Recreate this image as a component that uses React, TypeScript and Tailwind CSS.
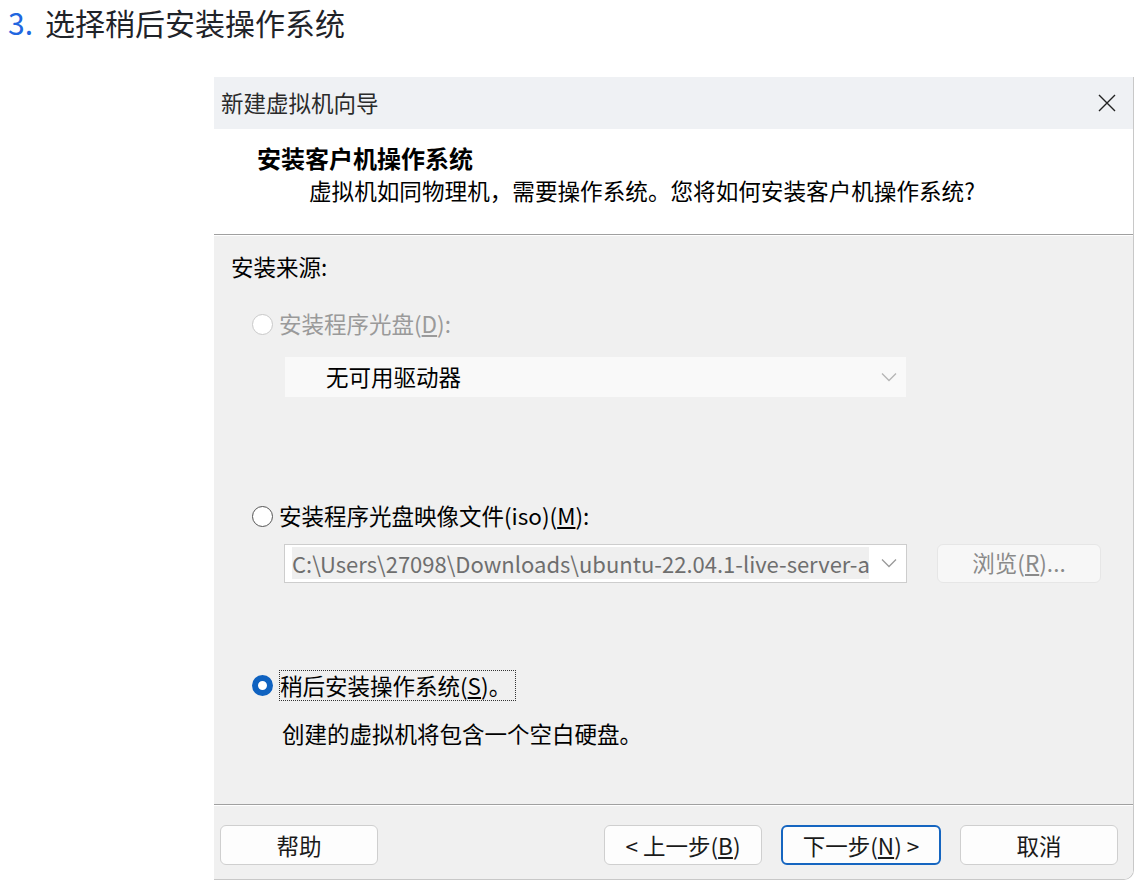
import React from 'react';

const cjk = { fontFamily: '"Noto Sans CJK SC", "Noto Sans", sans-serif' };

const Chevron: React.FC<{ color?: string }> = ({ color = '#8a8a8a' }) => (
  <svg width="16" height="10" viewBox="0 0 16 10" fill="none">
    <path d="M1 1.5 L8 8.5 L15 1.5" stroke={color} strokeWidth="1.3" />
  </svg>
);

const Radio: React.FC<{ checked?: boolean; disabled?: boolean }> = ({ checked, disabled }) => {
  if (checked) {
    return <span className="w-[21px] h-[21px] rounded-full border-[6px] border-[#0f62c0] bg-white shrink-0" />;
  }
  return (
    <span
      className={
        'w-[21px] h-[21px] rounded-full border-[1.5px] bg-white shrink-0 ' +
        (disabled ? 'border-[#c9c9c9] bg-[#f6f6f6]' : 'border-[#555555]')
      }
    />
  );
};

const Btn: React.FC<{ children: React.ReactNode; primary?: boolean; className?: string }> = ({ children, primary, className }) => (
  <button
    className={
      'h-[40px] w-[158px] rounded-[6px] bg-[#fdfdfd] text-[22.5px] text-[#1a1a1a] flex items-center justify-center leading-none ' +
      (primary ? 'border-2 border-[#1565c0] ' : 'border border-[#cfcfcf] ') +
      (className || '')
    }
    style={cjk}
  >
    {children}
  </button>
);

const App: React.FC = () => {
  return (
    <div className="w-[1137px] h-[882px] bg-white overflow-hidden" style={cjk}>
      {/* 步骤标题 */}
      <div className="h-[44px] flex items-center pl-[8px] text-[30px] text-[#1f2329]">
        <span className="text-[#2166e0] mr-[12px]">3.</span>
        <span>选择稍后安装操作系统</span>
      </div>

      <div className="ml-[214px] mt-[33px] w-[920px] rounded-br-[10px] border-r border-b border-[#c8c8c8] overflow-hidden">
        {/* 标题栏 */}
        <div className="h-[52px] bg-[#eff1f4] flex items-center justify-between pl-[7px] pr-[16px]">
          <span className="text-[22.5px] text-[#2a2a2a]">新建虚拟机向导</span>
          <svg width="20" height="20" viewBox="0 0 20 20">
            <path d="M2 2 L18 18 M18 2 L2 18" stroke="#222" strokeWidth="1.4" />
          </svg>
        </div>

        {/* 页眉 */}
        <div className="h-[105px] bg-white pt-[12px]">
          <div className="pl-[43px] h-[33px] leading-[33px] text-[24px] font-bold text-black">安装客户机操作系统</div>
          <div className="pl-[95px] h-[34px] leading-[34px] text-[22.6px] text-black">
            虚拟机如同物理机，需要操作系统。您将如何安装客户机操作系统?
          </div>
        </div>
        <div className="h-px bg-[#a0a0a0]" />
        <div className="h-px bg-white" />

        {/* 内容 */}
        <div className="bg-[#f0f0f0] h-[568px] pt-[15px] text-[22.5px]">
          <div className="pl-[17px] h-[30px] leading-[30px] text-black">安装来源:</div>

          <div className="mt-[28px] pl-[38px] h-[30px] flex items-center gap-[6px] text-[#9a9a9a]">
            <Radio disabled />
            <span>
              安装程序光盘(<span className="underline">D</span>):
            </span>
          </div>
          <div className="mt-[18px] ml-[71px] w-[621px] h-[40px] bg-[#f9f9f9] flex items-center justify-between pl-[41px] pr-[9px] text-black">
            <span>无可用驱动器</span>
            <Chevron color="#b5b5b5" />
          </div>

          <div className="mt-[104px] pl-[38px] h-[30px] flex items-center gap-[6px] text-black">
            <Radio />
            <span>
              安装程序光盘映像文件(iso)(<span className="underline">M</span>):
            </span>
          </div>
          <div className="mt-[12px] flex items-center h-[40px]">
            <div className="ml-[70px] w-[623px] h-[39px] bg-white border border-[#cdcdcd] flex items-center pl-[7px] pr-[9px]">
              <div className="flex-1 overflow-hidden whitespace-nowrap text-[22px]">
                <span className="bg-[#efefef] text-[#6e6e6e] pr-[2px]">C:\Users\27098\Downloads\ubuntu-22.04.1-live-server-a</span>
              </div>
              <span className="ml-[12px]">
                <Chevron color="#9a9a9a" />
              </span>
            </div>
            <div className="ml-[30px] w-[164px] h-[39px] rounded-[6px] bg-[#f7f7f7] border border-[#e6e6e6] flex items-center justify-center text-[#8a8a8a]">
              浏览(<span className="underline">R</span>)...
            </div>
          </div>

          <div className="mt-[86px] pl-[38px] h-[32px] flex items-center gap-[6px] text-black">
            <Radio checked />
            <span className="border border-dotted border-[#333] h-[31px] leading-[29px] pr-[4px]">
              稍后安装操作系统(<span className="underline">S</span>)。
            </span>
          </div>
          <div className="mt-[17px] pl-[68px] h-[30px] leading-[30px] text-black">创建的虚拟机将包含一个空白硬盘。</div>
        </div>
        <div className="h-px bg-[#a0a0a0]" />
        <div className="h-px bg-white" />

        {/* 按钮栏 */}
        <div className="bg-[#f0f0f0] h-[73px] pt-[19px] flex items-start pl-[6px]">
          <Btn>帮助</Btn>
          <Btn className="ml-[226px]">
            &lt; 上一步(<span className="underline">B</span>)
          </Btn>
          <Btn primary className="ml-[19px] w-[160px]">
            下一步(<span className="underline">N</span>) &gt;
          </Btn>
          <Btn className="ml-[19px]">取消</Btn>
        </div>
      </div>
    </div>
  );
};

export default App;
